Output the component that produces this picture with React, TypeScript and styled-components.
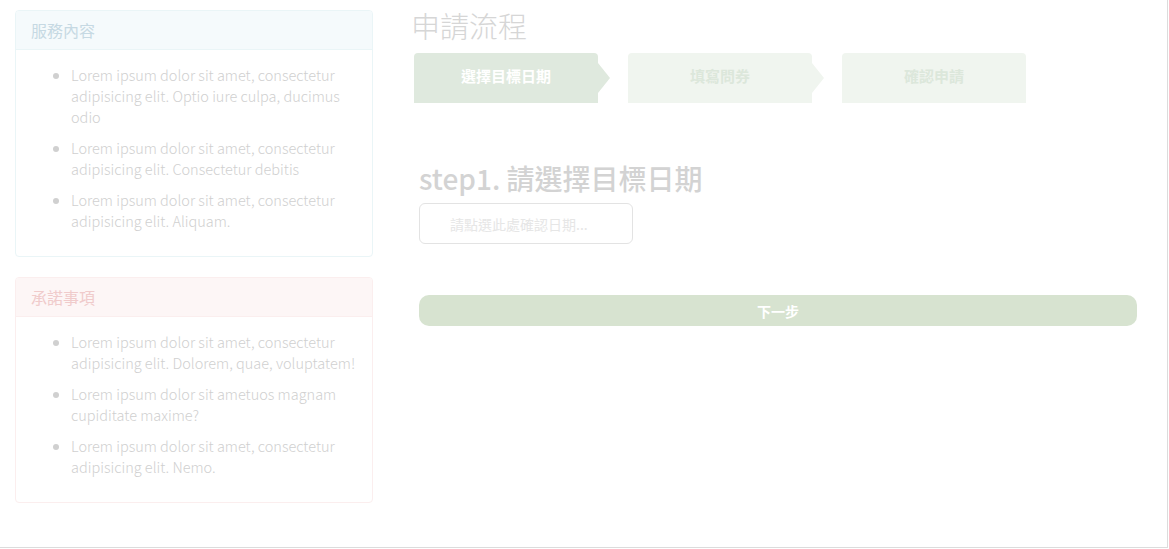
import styled, { createGlobalStyle } from "styled-components";

const GlobalStyle = createGlobalStyle`
  body {
    margin: 0;
    background: #ffffff;
    font-family: "Noto Sans CJK TC", "Noto Sans", sans-serif;
  }
`;

const Frame = styled.div`
  box-sizing: border-box;
  width: 1168px;
  height: 548px;
  border-right: 1px solid #dcdcdc;
  border-bottom: 1px solid #dcdcdc;
  padding: 10px 0 0 15px;
  display: grid;
  grid-template-columns: 358px 728px;
  column-gap: 41px;
  align-items: start;
`;

const Sidebar = styled.aside`
  display: flex;
  flex-direction: column;
  gap: 20px;
`;

type Tone = "info" | "danger";

const tones = {
  info: { border: "#eaf5f7", head: "#f5fafc", text: "#c6d9e3" },
  danger: { border: "#fbeeee", head: "#fdf6f6", text: "#f0cbcb" },
};

const Card = styled.section<{ $tone: Tone }>`
  border: 1px solid ${(p) => tones[p.$tone].border};
  border-radius: 4px;
  overflow: hidden;
`;

const CardHeader = styled.h3<{ $tone: Tone }>`
  margin: 0;
  height: 39px;
  box-sizing: border-box;
  padding: 0 15px;
  display: flex;
  align-items: center;
  font-size: 16px;
  font-weight: 400;
  color: ${(p) => tones[p.$tone].text};
  background: ${(p) => tones[p.$tone].head};
  border-bottom: 1px solid ${(p) => tones[p.$tone].border};
`;

const CardList = styled.ul`
  margin: 0;
  padding: 14px 8px 15px 55px;
  color: #d0d0d0;
  font-size: 14.5px;
  font-weight: 300;
  line-height: 21px;

  li {
    margin-bottom: 10px;
  }
`;

const Main = styled.main`
  display: flex;
  flex-direction: column;
`;

const Title = styled.h1`
  margin: -3px 0 10px -3px;
  font-size: 29px;
  font-weight: 300;
  line-height: 36px;
  color: #d6d6d6;
`;

const Steps = styled.ol`
  list-style: none;
  margin: 0;
  padding: 0;
  display: flex;
  gap: 30px;
`;

const Step = styled.li<{ $active?: boolean; $last?: boolean }>`
  position: relative;
  width: 184px;
  height: 50px;
  box-sizing: border-box;
  padding-bottom: 5px;
  display: flex;
  align-items: center;
  justify-content: center;
  border-radius: 4px 4px 0 0;
  font-size: 15px;
  font-weight: 700;
  background: ${(p) => (p.$active ? "#dfe9de" : "#f0f5ef")};
  color: ${(p) => (p.$active ? "#ffffff" : "#dce7db")};

  &::after {
    content: "";
    display: ${(p) => (p.$last ? "none" : "block")};
    position: absolute;
    left: 100%;
    top: 10px;
    border-top: 15px solid transparent;
    border-bottom: 15px solid transparent;
    border-left: 12px solid ${(p) => (p.$active ? "#dfe9de" : "#f0f5ef")};
  }
`;

const Form = styled.div`
  padding: 57px 5px 0;
  display: flex;
  flex-direction: column;
  align-items: flex-start;
`;

const StepHeading = styled.h2`
  margin: 0 0 7px;
  font-size: 28px;
  font-weight: 500;
  line-height: 36px;
  color: #d3d3d3;
`;

const DateInput = styled.input`
  box-sizing: border-box;
  width: 214px;
  height: 41px;
  padding: 0 0 0 30px;
  border: 1px solid #e3e3e3;
  border-radius: 6px;
  font-family: inherit;
  font-size: 14px;
  background: #ffffff;
  outline: none;

  &::placeholder {
    color: #e6e6e6;
  }
`;

const NextButton = styled.button`
  margin-top: 51px;
  width: 100%;
  height: 31px;
  border: none;
  border-radius: 10px;
  background: #d7e3d0;
  color: #ffffff;
  font-family: inherit;
  font-size: 14px;
  font-weight: 700;
  cursor: pointer;
`;

const services = [
  "Lorem ipsum dolor sit amet, consectetur adipisicing elit. Optio iure culpa, ducimus odio",
  "Lorem ipsum dolor sit amet, consectetur adipisicing elit. Consectetur debitis",
  "Lorem ipsum dolor sit amet, consectetur adipisicing elit. Aliquam.",
];

const promises = [
  "Lorem ipsum dolor sit amet, consectetur adipisicing elit. Dolorem, quae, voluptatem!",
  "Lorem ipsum dolor sit ametuos magnam cupiditate maxime?",
  "Lorem ipsum dolor sit amet, consectetur adipisicing elit. Nemo.",
];

const steps = ["選擇目標日期", "填寫問券", "確認申請"];

function InfoCard({ tone, title, items }: { tone: Tone; title: string; items: string[] }) {
  return (
    <Card $tone={tone}>
      <CardHeader $tone={tone}>{title}</CardHeader>
      <CardList>
        {items.map((text) => (
          <li key={text}>{text}</li>
        ))}
      </CardList>
    </Card>
  );
}

export default function App() {
  return (
    <>
      <GlobalStyle />
      <Frame>
        <Sidebar>
          <InfoCard tone="info" title="服務內容" items={services} />
          <InfoCard tone="danger" title="承諾事項" items={promises} />
        </Sidebar>

        <Main>
          <Title>申請流程</Title>
          <Steps>
            {steps.map((label, i) => (
              <Step key={label} $active={i === 0} $last={i === steps.length - 1}>
                {label}
              </Step>
            ))}
          </Steps>

          <Form>
            <StepHeading>step1. 請選擇目標日期</StepHeading>
            <DateInput readOnly placeholder="請點選此處確認日期..." />
            <NextButton type="button">下一步</NextButton>
          </Form>
        </Main>
      </Frame>
    </>
  );
}
